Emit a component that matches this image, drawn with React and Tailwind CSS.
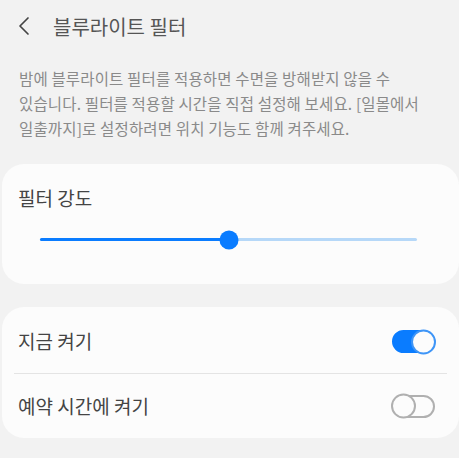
import { useState } from 'react';

const font = { fontFamily: '"Noto Sans CJK KR", "Noto Sans", sans-serif' };

// Samsung-style switch: filled blue track when on, outlined grey when off
const Switch = ({ on, onToggle }) => (
  <button
    onClick={onToggle}
    className={`relative w-[43px] h-[23px] rounded-full border-2 ${on ? 'bg-[#0a7cff] border-[#0a7cff]' : 'bg-[#fcfcfc] border-[#b0b0b0]'}`}
  >
    <span
      className={`absolute top-1/2 -translate-y-1/2 w-[25px] h-[25px] rounded-full bg-[#fcfcfc] border-2 ${on ? 'right-[-3px] border-[#3e95f7]' : 'left-[-3px] border-[#b0b0b0]'}`}
    />
  </button>
);

const App = () => {
  const [now, setNow] = useState(true);
  const [scheduled, setScheduled] = useState(false);
  const level = 50;

  return (
    <div className="w-[459px] h-[458px] bg-[#f2f2f2] overflow-hidden" style={font}>
      {/* Top bar */}
      <div className="flex items-center h-[54px] pl-[17px]">
        <svg width="14" height="20" viewBox="0 0 14 20" className="mt-[-2px]">
          <path d="M11 2 L3 10 L11 18" fill="none" stroke="#444" strokeWidth="1.7" strokeLinecap="round" strokeLinejoin="round" />
        </svg>
        <span className="ml-[22px] text-[20px] text-[#555]">블루라이트 필터</span>
      </div>

      {/* Description */}
      <p className="px-[19px] pt-[12px] text-[15.5px] leading-[25px] text-[#8a8a8a] tracking-[0.15px] whitespace-nowrap">
        밤에 블루라이트 필터를 적용하면 수면을 방해받지 않을 수<br />
        있습니다. 필터를 적용할 시간을 직접 설정해 보세요. [일몰에서<br />
        일출까지]로 설정하려면 위치 기능도 함께 켜주세요.
      </p>

      {/* Intensity card */}
      <div className="mt-[23px] ml-[2px] h-[120px] rounded-[22px] bg-[#fcfcfc] px-[18px] pt-[22px]">
        <div className="text-[19px] text-[#444] leading-[24px] -ml-[2px]">필터 강도</div>
        <div className="relative mt-[28px] ml-[20px] mr-[24px] h-[3px] rounded-full bg-[#b6d8f8]">
          <div className="absolute left-0 top-0 h-full rounded-full bg-[#0a7cff]" style={{ width: `${level}%` }} />
          <div
            className="absolute top-1/2 w-[19px] h-[19px] -translate-x-1/2 -translate-y-1/2 rounded-full bg-[#0a7cff]"
            style={{ left: `${level}%` }}
          />
        </div>
      </div>

      {/* Toggles card */}
      <div className="mt-[23px] ml-[2px] rounded-[22px] bg-[#fcfcfc] px-[12px]">
        <div className="flex items-center justify-between h-[66px] pl-[4px] pr-[12px] pt-[3px]">
          <span className="text-[19px] text-[#444]">지금 켜기</span>
          <Switch on={now} onToggle={() => setNow(!now)} />
        </div>
        <div className="h-px bg-[#e4e4e4]" />
        <div className="flex items-center justify-between h-[64px] pl-[4px] pr-[12px]">
          <span className="text-[19px] text-[#444]">예약 시간에 켜기</span>
          <Switch on={scheduled} onToggle={() => setScheduled(!scheduled)} />
        </div>
      </div>
    </div>
  );
};

export default App;
